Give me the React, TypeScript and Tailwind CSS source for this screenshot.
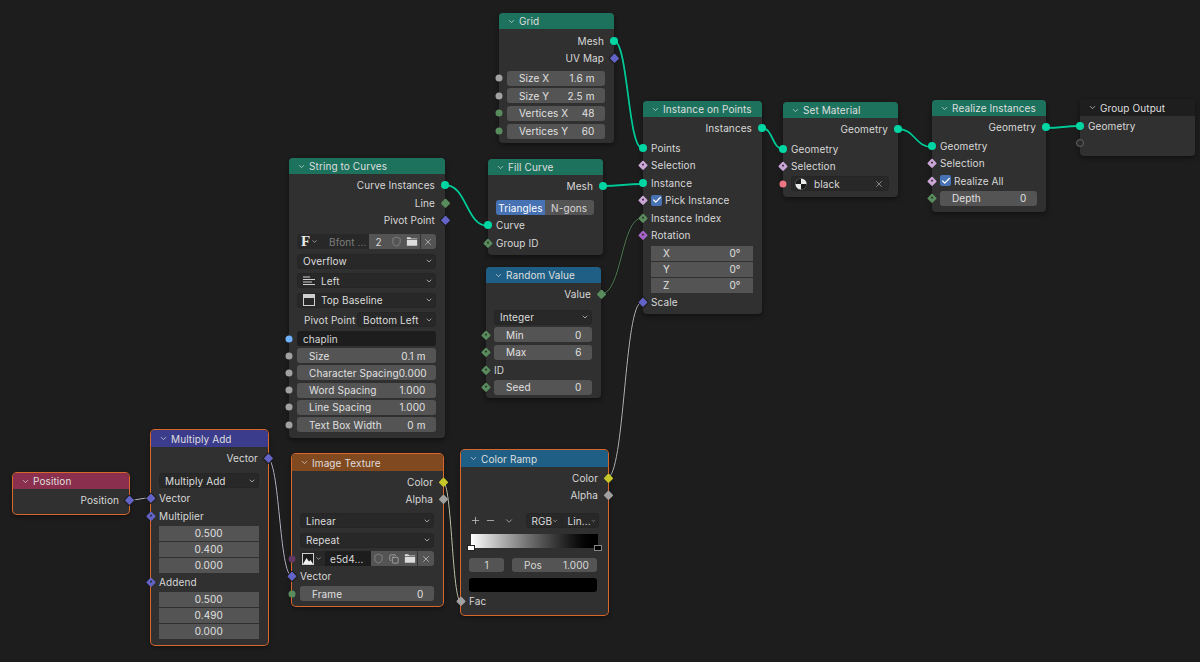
import type { ReactNode } from "react";
import { Check, ChevronDown, Copy, Minus, Plus, Shield, X } from "lucide-react";

type SocketKind =
  | "geometry"
  | "vector"
  | "vectorField"
  | "float"
  | "intField"
  | "int"
  | "bool"
  | "rotation"
  | "color"
  | "gray"
  | "material"
  | "image"
  | "string"
  | "empty"
  | "intRound";

const socketStyles: Record<SocketKind, { cls: string; dot?: boolean }> = {
  geometry: { cls: "w-[8px] h-[8px] rounded-full bg-[#00d6a3]" },
  vector: { cls: "w-[6.5px] h-[6.5px] rotate-45 rounded-[1px] bg-[#6363c7] outline outline-1 outline-[#1d1d1d]" },
  vectorField: { cls: "w-[6.5px] h-[6.5px] rotate-45 rounded-[1px] bg-[#6363c7]", dot: true },
  float: { cls: "w-[7px] h-[7px] rounded-full bg-[#a1a1a1]" },
  intField: { cls: "w-[6.5px] h-[6.5px] rotate-45 rounded-[1px] bg-[#598c5c]", dot: true },
  int: { cls: "w-[6.5px] h-[6.5px] rotate-45 rounded-[1px] bg-[#598c5c]" },
  intRound: { cls: "w-[7px] h-[7px] rounded-full bg-[#598c5c]" },
  bool: { cls: "w-[6.5px] h-[6.5px] rotate-45 rounded-[1px] bg-[#cca6d6]", dot: true },
  rotation: { cls: "w-[6.5px] h-[6.5px] rotate-45 rounded-[1px] bg-[#a663c7]", dot: true },
  color: { cls: "w-[6.5px] h-[6.5px] rotate-45 rounded-[1px] bg-[#c7c729]" },
  gray: { cls: "w-[6.5px] h-[6.5px] rotate-45 rounded-[1px] bg-[#a1a1a1]" },
  material: { cls: "w-[7px] h-[7px] rounded-full bg-[#eb7582]" },
  image: { cls: "w-[7px] h-[7px] rounded-full bg-[#633863]" },
  string: { cls: "w-[7px] h-[7px] rounded-full bg-[#70b2ff]" },
  empty: { cls: "w-[8px] h-[8px] rounded-full border border-[#666] bg-[#2b2b2b]" },
};

function Socket({ kind, side }: { kind: SocketKind; side: "in" | "out" }) {
  const s = socketStyles[kind];
  return (
    <span
      className={`absolute top-1/2 z-10 flex -translate-y-1/2 items-center justify-center ${side === "in" ? "left-0 -translate-x-1/2" : "right-0 translate-x-1/2"}`}
    >
      <span className={`flex items-center justify-center ${s.cls}`}>
        {s.dot && <span className="h-[2px] w-[2px] rounded-full bg-[#2a2a2a]" />}
      </span>
    </span>
  );
}

type NodeProps = {
  title: string;
  header: string;
  className: string;
  selected?: boolean;
  headerH?: string;
  children: ReactNode;
};

function Node({ title, header, className, selected, headerH = "h-[16px]", children }: NodeProps) {
  return (
    <div
      className={`absolute rounded-[4px] bg-[#303030] shadow-[0_2px_5px_rgba(0,0,0,0.45)] ${selected ? "ring-1 ring-[#d9662a]" : ""} ${className}`}
    >
      <div className={`flex items-center rounded-t-[4px] pl-[8px] text-[#dfdfdf] ${headerH} ${header}`}>
        <ChevronDown size={9} strokeWidth={1.8} className="mr-[3px] shrink-0" />
        <span>{title}</span>
      </div>
      {children}
    </div>
  );
}

function Out({ label, kind, h = "h-[17.5px]" }: { label: string; kind: SocketKind; h?: string }) {
  return (
    <div className={`relative flex items-center justify-end pr-[10px] ${h}`}>
      <span>{label}</span>
      <Socket kind={kind} side="out" />
    </div>
  );
}

function In({
  kind,
  h = "h-[17.5px]",
  children,
}: {
  kind?: SocketKind;
  h?: string;
  children: ReactNode;
}) {
  return (
    <div className={`relative flex items-center pl-[8px] pr-[9.5px] ${h}`}>
      {kind && <Socket kind={kind} side="in" />}
      <div className="flex min-w-0 flex-1 items-center">{children}</div>
    </div>
  );
}

function Field({ label, value }: { label: string; value: string }) {
  return (
    <div className="flex h-[15px] w-full items-center justify-between rounded-[3px] bg-[#545454] pl-[12px] pr-[10px] text-[#e0e0e0]">
      <span className="whitespace-nowrap">{label}</span>
      <span className="whitespace-nowrap">{value}</span>
    </div>
  );
}

function Select({ label, icon, className = "w-full" }: { label: string; icon?: ReactNode; className?: string }) {
  return (
    <div
      className={`flex h-[15px] items-center rounded-[3px] border border-[#252525] bg-[#282828] pl-[5px] pr-[2px] text-[#dcdcdc] ${className}`}
    >
      {icon}
      <span className="flex-1 whitespace-nowrap">{label}</span>
      <ChevronDown size={8} strokeWidth={2} />
    </div>
  );
}

function VecBox({ rows }: { rows: { label?: string; value: string }[] }) {
  return (
    <div className="flex h-[47px] flex-col gap-px overflow-hidden rounded-[3px] pl-[8px] pr-[9.5px]">
      {rows.map((r) => (
        <div
          key={r.value + (r.label ?? Math.random())}
          className={`flex flex-1 items-center bg-[#545454] px-[12px] text-[#e0e0e0] ${r.label ? "justify-between" : "justify-center"}`}
        >
          {r.label && <span>{r.label}</span>}
          <span>{r.value}</span>
        </div>
      ))}
    </div>
  );
}

function CheckBox({ label }: { label: string }) {
  return (
    <div className="flex items-center gap-[3px]">
      <span className="flex h-[11px] w-[11px] items-center justify-center rounded-[2px] bg-[#4772b3]">
        <Check size={10} strokeWidth={3} className="text-white" />
      </span>
      <span>{label}</span>
    </div>
  );
}

function FolderIcon() {
  return (
    <svg viewBox="0 0 14 12" className="h-[11px] w-[12px]" fill="#dcdcdc">
      <path d="M1 1h4l1 1.5h7V3H1z" />
      <path d="M1 4h12v7H1z" />
    </svg>
  );
}

function IconCell({ className, children }: { className: string; children: ReactNode }) {
  return <div className={`flex h-full items-center justify-center bg-[#545454] ${className}`}>{children}</div>;
}

function LinesIcon() {
  return (
    <svg viewBox="0 0 12 12" className="mr-[6px] h-[12px] w-[12px]" stroke="#cfcfcf" strokeWidth="1">
      <path d="M0 2h7M0 4.5h12M0 7h9M0 9.5h12" />
    </svg>
  );
}

function BaselineIcon() {
  return (
    <svg viewBox="0 0 12 12" className="mr-[6px] h-[12px] w-[12px]" fill="none" stroke="#cfcfcf" strokeWidth="1">
      <rect x="0.5" y="0.5" width="11" height="11" />
      <rect x="1" y="1" width="10" height="3" fill="#cfcfcf" stroke="none" />
    </svg>
  );
}

function MaterialBall() {
  return (
    <svg viewBox="0 0 12 12" className="ml-[3px] mr-[7px] h-[12px] w-[12px]">
      <circle cx="6" cy="6" r="5.6" fill="#e8e8e8" />
      <path d="M6 .4A5.6 5.6 0 0 0 .4 6H6zM6 6h5.6A5.6 5.6 0 0 1 6 11.6z" fill="#1a1a1a" />
    </svg>
  );
}

function ImageIcon() {
  return (
    <svg viewBox="0 0 12 12" className="h-[12px] w-[12px]">
      <rect x="0.5" y="0.5" width="11" height="11" fill="#1c1c1c" stroke="#cfcfcf" />
      <path d="M1 11 4.5 5 7 8.5 8.5 7l2.5 4z" fill="#f0f0f0" />
    </svg>
  );
}

const wires: { d: string; stroke: string; w: number }[] = [
  { d: "M614 41C628 41 628 148 642 148", stroke: "#00c896", w: 1.8 },
  { d: "M445 185C467 185 466 226 488 226", stroke: "#00c896", w: 1.8 },
  { d: "M603 186C620 186 625 184 642 184", stroke: "#00c896", w: 1.8 },
  { d: "M762 128C773 128 772 149 783 149", stroke: "#00c896", w: 1.8 },
  { d: "M898 129C915 129 915 147 932 147", stroke: "#00c896", w: 1.8 },
  { d: "M1046 128C1063 128 1063 126 1080 126", stroke: "#00c896", w: 1.8 },
  { d: "M601 294C622 294 621 218 642 218", stroke: "#4f7a52", w: 1 },
  { d: "M607 478C625 478 624 302 642 302", stroke: "#b4b4ba", w: 1 },
  { d: "M129 500C140 500 140 498 151 498", stroke: "#b9b9c4", w: 1 },
  { d: "M267 458C280 458 279 576 292 576", stroke: "#b4b4c8", w: 1 },
  { d: "M443 482C452 482 452 602 461 602", stroke: "#c4c4ac", w: 1 },
];

export default function App() {
  return (
    <div className="relative h-[662px] w-[1200px] overflow-hidden bg-[#1d1d1d] font-[Inter,sans-serif] text-[10px] leading-none tracking-[0.1px] text-[#d8d8d8]">
      <svg className="absolute inset-0 h-full w-full" fill="none">
        {wires.map((w) => (
          <path key={w.d} d={w.d} stroke="#151515" strokeWidth={w.w + 1} />
        ))}
        {wires.map((w) => (
          <path key={w.d} d={w.d} stroke={w.stroke} strokeWidth={w.w} />
        ))}
      </svg>

      <Node title="Grid" header="bg-[#1d725e]" className="left-[499px] top-[13px] h-[130px] w-[115px]">
        <div className="pt-[3px]">
          <Out label="Mesh" kind="geometry" />
          <Out label="UV Map" kind="vector" />
          <div className="h-[2.5px]" />
          <In kind="float" h="h-[17.6px]"><Field label="Size X" value="1.6 m" /></In>
          <In kind="float" h="h-[17.6px]"><Field label="Size Y" value="2.5 m" /></In>
          <In kind="intRound" h="h-[17.6px]"><Field label="Vertices X" value="48" /></In>
          <In kind="intRound" h="h-[17.6px]"><Field label="Vertices Y" value="60" /></In>
        </div>
      </Node>

      <Node title="String to Curves" header="bg-[#1d725e]" className="left-[289px] top-[158px] h-[280px] w-[156px]">
        <div className="pt-[2.5px]">
          <Out label="Curve Instances" kind="geometry" />
          <Out label="Line" kind="int" />
          <Out label="Pivot Point" kind="vector" />
          <div className="h-[3px]" />
          <In h="h-[19.5px]">
            <div className="flex h-[15px] w-full items-center overflow-hidden rounded-[3px] bg-[#282828]">
              <div className="flex h-full w-[26px] shrink-0 items-center pl-[4px]">
                <span className="font-['Liberation_Serif',serif] text-[15px] font-bold text-[#e8e8e8]">F</span>
                <ChevronDown size={7} strokeWidth={2} className="ml-[1px]" />
              </div>
              <div className="w-[46px] shrink-0 pl-[6px] text-[#7c7c7c]">Bfont ...</div>
              <IconCell className="w-[19px]">2</IconCell>
              <IconCell className="w-[16px]"><Shield size={11} strokeWidth={1.3} className="text-[#a0a0a0]" /></IconCell>
              <IconCell className="w-[16px]"><FolderIcon /></IconCell>
              <IconCell className="flex-1 border-l border-[#333]"><X size={10} strokeWidth={1.5} /></IconCell>
            </div>
          </In>
          <In h="h-[19.5px]"><Select label="Overflow" /></In>
          <In h="h-[19.5px]"><Select label="Left" icon={<LinesIcon />} /></In>
          <In h="h-[19.5px]"><Select label="Top Baseline" icon={<BaselineIcon />} /></In>
          <In h="h-[19.5px]">
            <span className="w-[60px] shrink-0 pl-[7px]">Pivot Point</span>
            <Select label="Bottom Left" className="flex-1" />
          </In>
          <div className="h-[1px]" />
          <In kind="string" h="h-[16.5px]">
            <div className="flex h-[15px] w-full items-center rounded-[3px] bg-[#1d1d1d] pl-[6px]">chaplin</div>
          </In>
          <In kind="float" h="h-[17.25px]"><Field label="Size" value="0.1 m" /></In>
          <In kind="float" h="h-[17.25px]"><Field label="Character Spacing" value="0.000" /></In>
          <In kind="float" h="h-[17.25px]"><Field label="Word Spacing" value="1.000" /></In>
          <In kind="float" h="h-[17.25px]"><Field label="Line Spacing" value="1.000" /></In>
          <In kind="float" h="h-[17.25px]"><Field label="Text Box Width" value="0 m" /></In>
        </div>
      </Node>

      <Node title="Fill Curve" header="bg-[#1d725e]" className="left-[488px] top-[159px] h-[96px] w-[115px]">
        <div className="pt-[2px]">
          <Out label="Mesh" kind="geometry" />
          <div className="h-[4.5px]" />
          <In>
            <div className="flex h-[15px] w-full overflow-hidden rounded-[3px]">
              <div className="flex w-1/2 items-center justify-center bg-[#4772b3] text-white">Triangles</div>
              <div className="flex w-1/2 items-center justify-center bg-[#545454]">N-gons</div>
            </div>
          </In>
          <In kind="geometry">Curve</In>
          <In kind="intField">Group ID</In>
        </div>
      </Node>

      <Node title="Random Value" header="bg-[#1f5f85]" className="left-[486px] top-[267px] h-[131px] w-[115px]">
        <div className="pt-[2px]">
          <Out label="Value" kind="int" />
          <div className="h-[6px]" />
          <In><Select label="Integer" /></In>
          <In kind="intField"><Field label="Min" value="0" /></In>
          <In kind="intField"><Field label="Max" value="6" /></In>
          <In kind="intField">ID</In>
          <In kind="intField"><Field label="Seed" value="0" /></In>
        </div>
      </Node>

      <Node title="Instance on Points" header="bg-[#1d725e]" className="left-[643px] top-[101px] h-[213px] w-[119px]">
        <div className="pt-[2px]">
          <Out label="Instances" kind="geometry" />
          <div className="h-[2.5px]" />
          <In kind="geometry">Points</In>
          <In kind="bool">Selection</In>
          <In kind="geometry">Instance</In>
          <In kind="bool"><CheckBox label="Pick Instance" /></In>
          <In kind="intField">Instance Index</In>
          <In kind="rotation">Rotation</In>
          <div className="h-[1.5px]" />
          <VecBox rows={[{ label: "X", value: "0°" }, { label: "Y", value: "0° " }, { label: "Z", value: "0°  " }]} />
          <div className="h-[1px]" />
          <In kind="vector">Scale</In>
        </div>
      </Node>

      <Node title="Set Material" header="bg-[#1d725e]" className="left-[783px] top-[102px] h-[95px] w-[115px]">
        <div className="pt-[2px]">
          <Out label="Geometry" kind="geometry" />
          <div className="h-[2.5px]" />
          <In kind="geometry">Geometry</In>
          <In kind="bool">Selection</In>
          <In kind="material">
            <div className="flex h-[15px] w-full items-center rounded-[3px] border border-[#252525] bg-[#282828]">
              <MaterialBall />
              <span className="flex-1">black</span>
              <X size={10} strokeWidth={1.3} className="mr-[4px]" />
            </div>
          </In>
        </div>
      </Node>

      <Node title="Realize Instances" header="bg-[#1d725e]" className="left-[932px] top-[100px] h-[112px] w-[114px]">
        <div className="pt-[2px]">
          <Out label="Geometry" kind="geometry" />
          <div className="h-[1.5px]" />
          <In kind="geometry">Geometry</In>
          <In kind="bool">Selection</In>
          <In kind="bool"><CheckBox label="Realize All" /></In>
          <In kind="intField"><Field label="Depth" value="0" /></In>
        </div>
      </Node>

      <Node title="Group Output" header="bg-[#1e1e1e]" headerH="h-[17px]" className="left-[1080px] top-[99px] h-[57px] w-[115px]">
        <div className="pt-[1px]">
          <In kind="geometry">Geometry</In>
          <In kind="empty">{""}</In>
        </div>
      </Node>

      <Node title="Position" header="bg-[#8a2f4d]" selected className="left-[13px] top-[473px] h-[41px] w-[116px]">
        <div className="pt-[2px]">
          <Out label="Position" kind="vector" />
        </div>
      </Node>

      <Node title="Multiply Add" header="bg-[#3c3c8c]" headerH="h-[17px]" selected className="left-[151px] top-[430px] h-[215px] w-[117px]">
        <div className="pt-[2px]">
          <Out label="Vector" kind="vector" />
          <div className="h-[5.5px]" />
          <In><Select label="Multiply Add" /></In>
          <In kind="vector">Vector</In>
          <In kind="vectorField">Multiplier</In>
          <div className="h-[1.25px]" />
          <VecBox rows={[{ value: "0.500" }, { value: "0.400" }, { value: "0.000" }]} />
          <In kind="vectorField">Addend</In>
          <div className="h-[1.25px]" />
          <VecBox rows={[{ value: "0.500 " }, { value: "0.490" }, { value: "0.000 " }]} />
        </div>
      </Node>

      <Node title="Image Texture" header="bg-[#81491f]" headerH="h-[17px]" selected className="left-[292px] top-[454px] h-[152px] w-[151px]">
        <div className="pt-[2px]">
          <Out label="Color" kind="color" />
          <Out label="Alpha" kind="gray" />
          <div className="h-[3px]" />
          <In h="h-[19.5px]"><Select label="Linear" /></In>
          <In h="h-[19.5px]"><Select label="Repeat" /></In>
          <In kind="image">
            <div className="flex h-[15px] w-full items-center overflow-hidden rounded-[3px] bg-[#282828]">
              <div className="flex h-full w-[25px] shrink-0 items-center pl-[2px]">
                <ImageIcon />
                <ChevronDown size={7} strokeWidth={2} className="ml-[1px]" />
              </div>
              <div className="w-[46px] shrink-0 bg-[#1d1d1d] py-[3px] pl-[5px]">e5d4...</div>
              <IconCell className="w-[15px]"><Shield size={11} strokeWidth={1.3} className="text-[#a0a0a0]" /></IconCell>
              <IconCell className="w-[16px]"><Copy size={10} strokeWidth={1.3} /></IconCell>
              <IconCell className="w-[15px]"><FolderIcon /></IconCell>
              <IconCell className="flex-1 border-l border-[#333]"><X size={10} strokeWidth={1.5} /></IconCell>
            </div>
          </In>
          <In kind="vector">Vector</In>
          <In kind="intRound"><Field label="Frame" value="0" /></In>
        </div>
      </Node>

      <Node title="Color Ramp" header="bg-[#1f5f85]" headerH="h-[17px]" selected className="left-[461px] top-[450px] h-[165px] w-[147px]">
        <div className="pt-[2px]">
          <Out label="Color" kind="color" />
          <Out label="Alpha" kind="gray" />
          <div className="h-[8px]" />
          <In>
            <Plus size={11} strokeWidth={1.5} className="ml-[1px]" />
            <Minus size={11} strokeWidth={1.5} className="ml-[4px]" />
            <ChevronDown size={10} strokeWidth={1.5} className="ml-[8px]" />
            <div className="ml-auto flex">
              <Select label="RGB" className="w-[36px] rounded-r-none" />
              <Select label="Lin..." className="w-[37px] rounded-l-none" />
            </div>
          </In>
          <div className="relative mx-[10px] mt-[4px] h-[14px] bg-gradient-to-r from-white to-black">
            <span className="absolute bottom-[-3px] left-[-4px] h-[6px] w-[8px] border border-[#222] bg-white" />
            <span className="absolute bottom-[-3px] right-[-4px] h-[6px] w-[8px] border border-[#888] bg-black" />
          </div>
          <div className="mt-[10px] flex h-[14px] justify-between pl-[8px] pr-[11px]">
            <div className="flex w-[35px] items-center justify-center rounded-[3px] bg-[#545454]">1</div>
            <div className="flex w-[85px] items-center justify-between rounded-[3px] bg-[#545454] pl-[12px] pr-[8px]">
              <span>Pos</span>
              <span>1.000</span>
            </div>
          </div>
          <div className="ml-[8px] mr-[11px] mt-[6px] h-[14px] rounded-[3px] bg-black" />
          <div className="h-[1px]" />
          <In kind="gray">Fac</In>
        </div>
      </Node>
    </div>
  );
}
